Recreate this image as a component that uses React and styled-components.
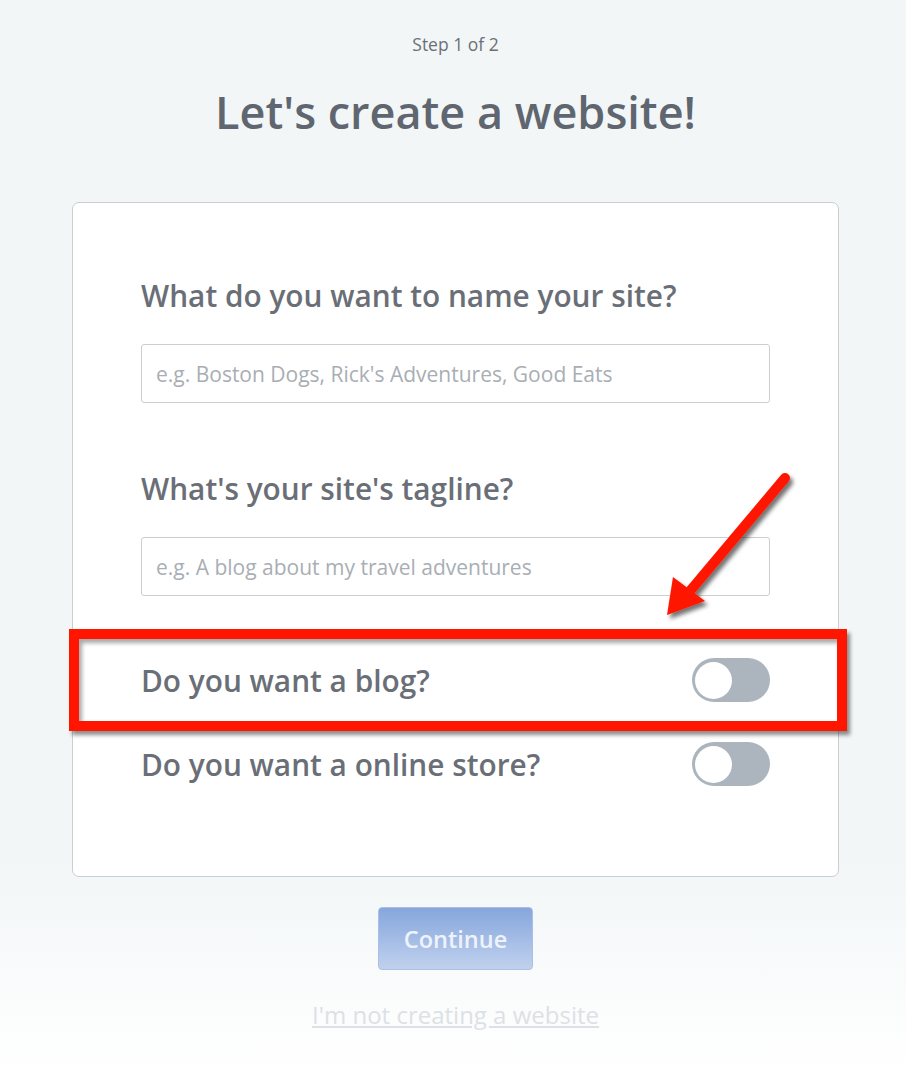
import React from 'react';
import styled, { createGlobalStyle } from 'styled-components';

const GlobalStyle = createGlobalStyle`
    html, body {
        margin: 0;
        padding: 0;
    }
    body {
        font-family: "Open Sans", "Liberation Sans", sans-serif;
        background: linear-gradient(180deg, #f2f6f7 0px, #f2f6f7 860px, #ffffff 1072px);
        min-height: 1072px;
    }
`

const Page = styled.div`
    display: flex;
    flex-direction: column;
    align-items: center;
    padding: 32px 0 0 5px;
`

const Step = styled.div`
    font-size: 17.5px;
    line-height: 24px;
    color: #6b7078;
`

const Title = styled.h1`
    margin: 26px 0 0;
    font-size: 45px;
    line-height: 60px;
    font-weight: 600;
    color: #5f6670;
`

const Card = styled.div`
    position: relative;
    box-sizing: border-box;
    width: 767px;
    margin-top: 60px;
    padding: 73px 68px 70px 68px;
    background: #fff;
    border: 1px solid #c9ced3;
    border-radius: 7px;
`

const Label = styled.label`
    display: block;
    font-size: 29.8px;
    line-height: 40px;
    font-weight: 600;
    color: #6a6f77;
`

const Input = styled.input`
    display: block;
    box-sizing: border-box;
    width: 629px;
    height: 59px;
    margin: 28px 0 66px;
    padding: 0 14px;
    border: 1px solid #c9ced3;
    border-radius: 3px;
    font-family: inherit;
    font-size: 21px;
    color: #5f6670;
    background: #fff;
    &::placeholder {
        color: #a9aeb4;
    }
`

const Question = styled.div`
    display: flex;
    align-items: center;
    justify-content: space-between;
    height: 84px;
    font-size: 29.8px;
    font-weight: 600;
    color: #6a6f77;
    &:first-of-type {
        margin-top: -24px;
    }
`

const Toggle = styled.span`
    display: flex;
    align-items: center;
    box-sizing: border-box;
    width: 78px;
    height: 44px;
    padding: 0 3px;
    border-radius: 22px;
    background: #acb5bd;
    &::before {
        content: "";
        width: 37px;
        height: 37px;
        border-radius: 50%;
        background: #fff;
    }
`

const Highlight = styled.div`
    position: absolute;
    left: -4px;
    top: 426px;
    width: 778px;
    height: 102px;
    box-sizing: border-box;
    border: 10px solid #ff1500;
    box-shadow: 3px 4px 4px rgba(0, 0, 0, 0.45), inset 3px 4px 4px rgba(0, 0, 0, 0.35);
    pointer-events: none;
`

const Arrow = styled.svg`
    position: absolute;
    left: 580px;
    top: 260px;
    overflow: visible;
    pointer-events: none;
`

const Continue = styled.button`
    margin-top: 30px;
    width: 155px;
    height: 63px;
    border: 1px solid #a9bfe6;
    border-radius: 4px;
    background: linear-gradient(180deg, #86a6dc 0%, #c0d1ee 100%);
    color: #eef3fb;
    font-family: inherit;
    font-size: 23.5px;
    font-weight: 600;
`

const Skip = styled.a`
    margin-top: 29px;
    font-size: 24px;
    line-height: 32px;
    color: #dde1e5;
    text-decoration: underline;
`

const App = () => {
    return (
        <Page>
            <GlobalStyle />
            <Step>Step 1 of 2</Step>
            <Title>Let's create a website!</Title>
            <Card>
                <Label>What do you want to name your site?</Label>
                <Input placeholder="e.g. Boston Dogs, Rick's Adventures, Good Eats" />
                <Label>What's your site's tagline?</Label>
                <Input placeholder="e.g. A blog about my travel adventures" />
                <Question>
                    Do you want a blog?
                    <Toggle />
                </Question>
                <Question>
                    Do you want a online store?
                    <Toggle />
                </Question>

                <Highlight />
                <Arrow width="150" height="160" viewBox="0 0 150 160">
                    <defs>
                        <filter id="shade" x="-20%" y="-20%" width="150%" height="150%">
                            <feDropShadow dx="3" dy="4" stdDeviation="2" floodColor="#000" floodOpacity="0.55" />
                        </filter>
                    </defs>
                    <g filter="url(#shade)">
                        <line x1="132" y1="15" x2="32" y2="134" stroke="#ff1500" strokeWidth="10" strokeLinecap="round" />
                        <polygon points="14,152 20,114 52,138" fill="#ff1500" />
                    </g>
                </Arrow>
            </Card>
            <Continue>Continue</Continue>
            <Skip>I'm not creating a website</Skip>
        </Page>
    )
}

export default App;
